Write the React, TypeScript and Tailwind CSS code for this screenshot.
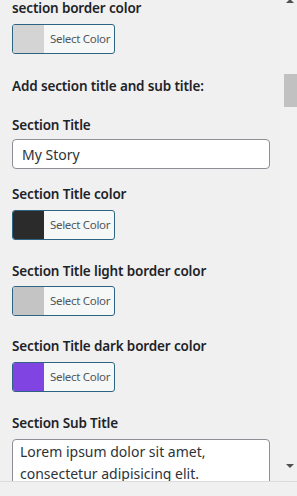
import React from 'react';

type ColorProps = {
  swatch: string;
};

const ColorButton = ({ swatch }: ColorProps) => {
  return (
    <button
      type="button"
      className="flex h-[30px] w-[103px] overflow-hidden rounded-[3px] border border-[#2c6482] bg-[#f6f7f7] p-0 text-left"
    >
      <span className="h-full w-[31px] shrink-0" style={{ backgroundColor: swatch }} />
      <span className="flex h-full flex-1 items-center whitespace-nowrap pl-[6px] text-[11.5px] tracking-[-0.3px] text-[#50575e]">
        Select Color
      </span>
    </button>
  );
};

const Label = ({ children }: { children: React.ReactNode }) => (
  <p className="whitespace-nowrap text-[13.5px] font-semibold leading-[20px] tracking-[-0.15px] text-[#1d2327]">
    {children}
  </p>
);

const App = () => {
  return (
    <div
      className="flex h-[496px] w-[297px] flex-col overflow-hidden bg-[#f0f0f1]"
      style={{ fontFamily: '"Noto Sans", "Open Sans", sans-serif' }}
    >
      <div className="flex min-h-0 flex-1 overflow-hidden">
        <div className="min-w-0 flex-1 pl-[12px] pr-[11px]">
          <div className="-mt-[2px]">
            <Label>section border color</Label>
          </div>
          <div className="mt-[6px]">
            <ColorButton swatch="#d4d4d4" />
          </div>

          <div className="mt-[22px]">
            <Label>Add section title and sub title:</Label>
          </div>

          <div className="mt-[19px]">
            <Label>Section Title</Label>
          </div>
          <input
            className="mt-[4px] block h-[30px] w-full rounded-[4px] border border-[#8c8f94] bg-white px-[9px] text-[14px] text-[#2c3338] outline-none"
            defaultValue="My Story"
          />

          <div className="mt-[15px]">
            <Label>Section Title color</Label>
          </div>
          <div className="mt-[6px]">
            <ColorButton swatch="#2b2b2b" />
          </div>

          <div className="mt-[21px]">
            <Label>Section Title light border color</Label>
          </div>
          <div className="mt-[5px]">
            <ColorButton swatch="#c4c4c4" />
          </div>

          <div className="mt-[20px]">
            <Label>Section Title dark border color</Label>
          </div>
          <div className="mt-[6px]">
            <ColorButton swatch="#7f44e2" />
          </div>

          <div className="mt-[21px]">
            <Label>Section Sub Title</Label>
          </div>
          <textarea
            className="mt-[6px] block h-[70px] w-full resize-none rounded-[4px] border border-[#8c8f94] bg-white px-[7px] py-[1px] text-[14px] leading-[22px] text-[#2c3338] outline-none"
            defaultValue="Lorem ipsum dolor sit amet, consectetur adipisicing elit."
          />
        </div>

        <div className="flex w-[16px] shrink-0 flex-col items-end bg-[#f1f1f1]">
          <div className="flex h-[4px] w-full justify-center pl-[2px]">
            <svg width="8" height="4" viewBox="0 0 8 4" className="-mt-[1px]">
              <path d="M0 4 L4 0 L8 4 Z" fill="#505050" />
            </svg>
          </div>
          <div className="mt-[70px] h-[33px] w-[13px] bg-[#c1c1c1]" />
          <div className="flex-1" />
          <div className="mb-[13px] flex w-full justify-center pl-[2px]">
            <svg width="8" height="4" viewBox="0 0 8 4">
              <path d="M0 0 L8 0 L4 4 Z" fill="#505050" />
            </svg>
          </div>
        </div>
      </div>
      <div className="h-[15px] shrink-0 border-t border-[#dcdcde] bg-[#f0f0f1]" />
    </div>
  );
};

export default App;
